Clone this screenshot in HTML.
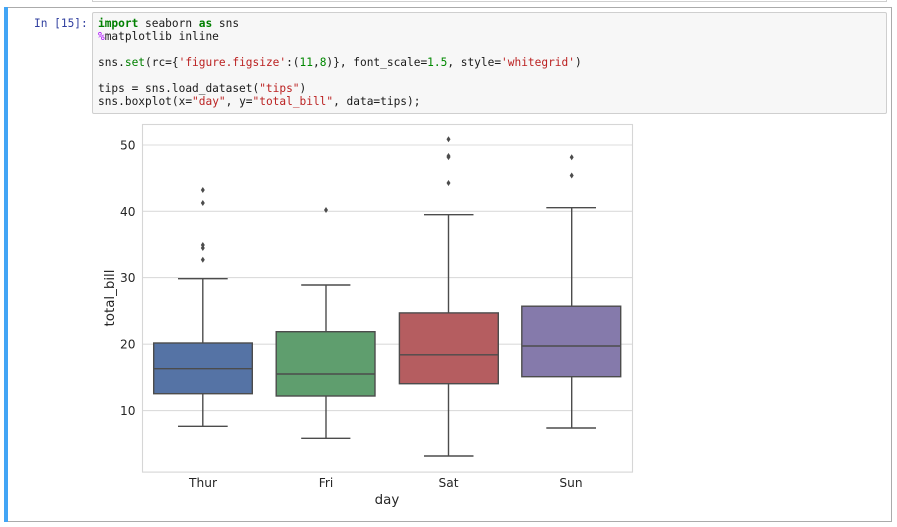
<!DOCTYPE html>
<html>
<head>
<meta charset="utf-8">
<style>
html,body{margin:0;padding:0;background:#fff;width:897px;height:527px;overflow:hidden}
.abs{position:absolute;box-sizing:border-box}
pre{margin:0;font:11.17px/13px "DejaVu Sans Mono","Liberation Mono",monospace;color:#1a1a1a;white-space:pre;filter:blur(.3px)}
.k{color:#008000;font-weight:bold}.m{color:#a0f}.f{color:#008000}.s{color:#b22}.n{color:#080}
svg text{font-family:"DejaVu Sans","Liberation Sans",sans-serif;fill:#262626}
</style>
</head>
<body>
<div class="abs" style="left:92px;top:-10px;width:795px;height:12px;border:1px solid #cfcfcf;background:#fff"></div>
<div class="abs" style="left:4px;top:7px;width:888px;height:515px;border:1px solid #ababab;background:#fff"></div>
<div class="abs" style="left:4px;top:7px;width:4px;height:515px;background:#42a5f5"></div>
<pre class="abs" style="left:34px;top:17px;color:#303f9f">In [15]:</pre>
<div class="abs" style="left:92px;top:12px;width:795px;height:102px;border:1px solid #cfcfcf;border-radius:2px;background:#f7f7f7"></div>
<pre class="abs" style="left:98px;top:17px"><span class="k">import</span> seaborn <span class="k">as</span> sns
<span class="m">%</span>matplotlib inline

sns.<span class="f">set</span>(rc={<span class="s">'figure.figsize'</span>:(<span class="n">11</span>,<span class="n">8</span>)}, font_scale=<span class="n">1.5</span>, style=<span class="s">'whitegrid'</span>)

tips = sns.load_dataset(<span class="s">"tips"</span>)
sns.boxplot(x=<span class="s">"day"</span>, y=<span class="s">"total_bill"</span>, data=tips);</pre>
<svg class="abs" style="left:0;top:0;filter:blur(.35px)" width="897" height="527" viewBox="0 0 897 527">
<g stroke="#dcdcdc" stroke-width="1.1" fill="none">
<line x1="142" y1="145" x2="633" y2="145"/>
<line x1="142" y1="211.3" x2="633" y2="211.3"/>
<line x1="142" y1="277.6" x2="633" y2="277.6"/>
<line x1="142" y1="344.2" x2="633" y2="344.2"/>
<line x1="142" y1="410.6" x2="633" y2="410.6"/>
<rect x="142.5" y="124.5" width="490" height="347.6" stroke="#d6d6d6"/>
</g>
<g stroke="#4c4c4c" stroke-width="1.4" fill="none">
<path d="M202.8 278.7V343M202.8 393.7V426.3M178 278.7H227.7M178 426.3H227.7"/>
<path d="M326 285V331.7M326 396V438.3M301.2 285H350.4M301.2 438.3H350.4"/>
<path d="M448.5 214.7V312.7M448.5 383.7V456M424 214.7H473.5M424 456H473.5"/>
<path d="M571.7 207.7V306M571.7 376.7V428M546.3 207.7H596M546.3 428H596"/>
</g>
<g stroke="#4c4c4c" stroke-width="1.4">
<rect x="153.7" y="343" width="98.6" height="50.7" fill="#5573a5"/>
<line x1="153.7" y1="368.7" x2="252.3" y2="368.7"/>
<rect x="276.2" y="331.7" width="98.8" height="64.3" fill="#5f9e6e"/>
<line x1="276.2" y1="374" x2="375" y2="374"/>
<rect x="399.4" y="312.9" width="98.9" height="70.8" fill="#b55d60"/>
<line x1="399.4" y1="354.8" x2="498.3" y2="354.8"/>
<rect x="521.8" y="306.2" width="98.9" height="70.5" fill="#857aab"/>
<line x1="521.8" y1="346" x2="620.7" y2="346"/>
</g>
<g fill="#4c4c4c">
<path d="M202.8 187l2 3-2 3-2-3z"/>
<path d="M202.8 200l2 3-2 3-2-3z"/>
<path d="M202.8 242l2 3-2 3-2-3z"/>
<path d="M202.8 245l2 3-2 3-2-3z"/>
<path d="M202.8 256.8l2 3-2 3-2-3z"/>
<path d="M326 207l2 3-2 3-2-3z"/>
<path d="M448.5 136.3l2 3-2 3-2-3z"/>
<path d="M448.5 153l2 3-2 3-2-3z"/>
<path d="M448.5 154.1l2 3-2 3-2-3z"/>
<path d="M448.5 180l2 3-2 3-2-3z"/>
<path d="M571.7 154.2l2 3-2 3-2-3z"/>
<path d="M571.7 172.5l2 3-2 3-2-3z"/>
</g>
<g font-size="12.2" text-anchor="end">
<text x="135.5" y="149.5">50</text>
<text x="135.5" y="215.8">40</text>
<text x="135.5" y="282">30</text>
<text x="135.5" y="348.6">20</text>
<text x="135.5" y="415">10</text>
</g>
<g font-size="12.2" text-anchor="middle">
<text x="203" y="487">Thur</text>
<text x="326" y="487">Fri</text>
<text x="448.5" y="487">Sat</text>
<text x="571" y="487">Sun</text>
</g>
<text x="387" y="504" font-size="13.4" text-anchor="middle">day</text>
<text transform="translate(114 298) rotate(-90)" font-size="13.4" text-anchor="middle">total_bill</text>
</svg>
</body>
</html>
